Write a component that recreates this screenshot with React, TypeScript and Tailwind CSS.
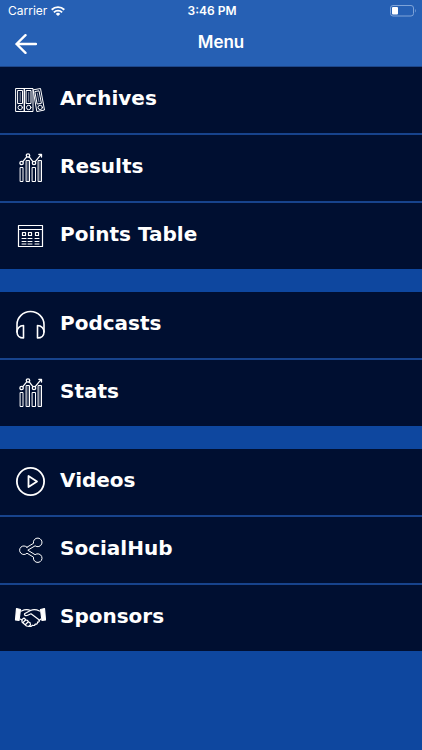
import type { ReactNode } from "react";

interface MenuItem {
  label: string;
  icon: ReactNode;
}

function Icon({ children, width = 1 }: { children: ReactNode; width?: number }) {
  return (
    <svg
      viewBox="0 0 32 32"
      className="size-8 shrink-0"
      fill="none"
      stroke="currentColor"
      strokeWidth={width}
      strokeLinecap="round"
      strokeLinejoin="round"
      aria-hidden="true"
    >
      {children}
    </svg>
  );
}

function BindersIcon() {
  return (
    <Icon>
      <path d="M2 4.5h8.5v23H2zM10.500 4.500h8.500v23h-8.500z" />
      <path d="M4 6.500h4.500v13H4zM12.500 6.500H17v13h-4.500z" />
      <path d="M6.200 8.500v9M14.700 8.500v9" strokeWidth="0.8" opacity="0.7" />
      <circle cx="6.2" cy="23.5" r="2.2" />
      <circle cx="14.7" cy="23.5" r="2.2" />
      <path d="m19.500 5.800 7-1.300L30.500 26l-7.300 1.500z" />
      <path d="m21.200 7.500 3.800-.7 2.400 12.500-3.900.7z" />
      <path d="m23.300 9.200 1.700 8.600" strokeWidth="0.8" opacity="0.7" />
      <circle cx="26.200" cy="23.400" r="2.200" />
    </Icon>
  );
}

function ChartIcon() {
  return (
    <Icon>
      <path d="M6.500 15.500h2.500v14H6.500zM12.500 8.500h3v21h-3zM18.500 15.500h3v14h-3zM24.500 8.500h3v21h-3z" />
      <path d="M14 9v20M26 9v20" strokeWidth="1" opacity="0.5" />
      <circle cx="7.6" cy="11" r="1.7" strokeWidth="1.3" />
      <circle cx="14" cy="3.500" r="1.700" strokeWidth="1.3" />
      <circle cx="20" cy="11" r="1.700" strokeWidth="1.3" />
      <path d="M8.800 9.600 12.700 4.900M15.200 4.900l3.700 4.700M21.200 9.600l5.800-7M24.800 2.300h2.700V5" strokeWidth="1.3" />
    </Icon>
  );
}

function TableIcon() {
  return (
    <Icon>
      <path d="M4.5 5.5h24v21h-24zM4.500 9.500h24" strokeWidth="1.2" />
      <path d="M8.500 12.500h3v3h-3zM14.500 12.500h3v3h-3zM21.500 12.500h3v3h-3z" strokeWidth="1.2" />
      <path d="M8 18.500h4M14 18.500h4M21 18.500h4M8 21.500h4M14 21.500h4M21 21.500h4M8 24h4M14 24h4M21 24h4" />
    </Icon>
  );
}

function HeadphonesIcon() {
  return (
    <Icon width={1.6}>
      <path d="M3 23v-7.500a13.500 13 0 0 1 27 0V23" />
      <path d="M9.500 16.500V29C5.500 29 3 26.500 3 23s2.500-6.500 6.500-6.500zM23.500 16.500V29c4 0 6.500-2.500 6.500-6s-2.500-6.500-6.500-6.500z" />
    </Icon>
  );
}

function PlayIcon() {
  return (
    <Icon width={1.8}>
      <circle cx="16.5" cy="15.5" r="13.6" />
      <path d="M14.500 10v11l8.500-5.500z" />
    </Icon>
  );
}

function ShareIcon() {
  return (
    <Icon>
      <path d="M13 13.200 19.500 9.300a4.300 4.300 0 1 1 1.600 2.500L13.800 16.200l7.300 4.500a4.300 4.300 0 1 1-1.600 2.500L13 19.200a4.300 4.300 0 1 1 0-6z" />
    </Icon>
  );
}

function HandshakeIcon() {
  return (
    <Icon width={1.2}>
      <path d="m2.500 6.500 4 1L5 18.500 1.500 18zM30.500 6.500l-4 1L28 18.500l3.500-.5z" fill="currentColor" />
      <path d="M7.500 9c3-1.500 6-2 9-.5 3-1.500 6-1 9 .5M6 17l2 1M27 17l-2 1.500" />
      <path d="m16.500 8.500-6 3.300c-.5 1.700 1.500 2.200 3.200 1.400l3.300-1.400 8 6c1 1.200 0 2.600-1.500 2.200.4 1.500-.8 2.500-2.200 2-.3 1.400-1.700 1.900-3 1.200-.6 1.300-2 1.500-3 .8" />
      <path d="m8 17.500 2-1.500 2 2 1.500.3 1 1.700 1.500.6.5 2.200-1.500 1.600-2.500-.4-4.500-4z" />
      <path d="m9 20.500 2.500-2.500M11.500 22.500l2.500-2.500" />
    </Icon>
  );
}

const groups: MenuItem[][] = [
  [
    { label: "Archives", icon: <BindersIcon /> },
    { label: "Results", icon: <ChartIcon /> },
    { label: "Points Table", icon: <TableIcon /> },
  ],
  [
    { label: "Podcasts", icon: <HeadphonesIcon /> },
    { label: "Stats", icon: <ChartIcon /> },
  ],
  [
    { label: "Videos", icon: <PlayIcon /> },
    { label: "SocialHub", icon: <ShareIcon /> },
    { label: "Sponsors", icon: <HandshakeIcon /> },
  ],
];

function StatusBar() {
  return (
    <div className="grid h-[22px] grid-cols-3 items-center pr-1.5 pl-2">
      <div className="flex items-center gap-1">
        <span className="text-xs">Carrier</span>
        <svg viewBox="0 0 14 10" className="h-2.5 w-3.5" fill="none" stroke="currentColor" strokeWidth="1.9" aria-hidden="true">
          <path d="M.7 3.7a9 9 0 0 1 12.6 0M2.900 6.300a5.800 5.800 0 0 1 8.200 0" />
          <path d="M7 10 4.800 7.900a3.200 3.200 0 0 1 4.400 0z" fill="currentColor" stroke="none" />
        </svg>
      </div>
      <span className="text-center text-xs font-semibold">3:46 PM</span>
      <svg viewBox="0 0 26 12" className="h-3 w-[26px] justify-self-end" fill="none" aria-hidden="true">
        <rect x=".5" y=".5" width="23" height="10.5" rx="2.5" stroke="#7ea3d8" />
        <rect x="2" y="2" width="6" height="7.5" rx="1" fill="white" />
        <path d="M25 4v3.500c1-.5 1-3 0-3.500z" fill="#7ea3d8" />
      </svg>
    </div>
  );
}

export default function App() {
  return (
    <div className="min-h-screen bg-[#0e479f] font-['Inter',sans-serif] text-white">
      <header className="border-b border-[#1d4689] bg-[#2660b4]">
        <StatusBar />
        <div className="flex h-11 items-center">
          <button type="button" aria-label="Back" className="flex w-[52px] pl-[15px]">
            <svg viewBox="0 0 22 20" className="h-5 w-[22px]" fill="none" stroke="currentColor" strokeWidth="2.4" strokeLinecap="round" strokeLinejoin="round" aria-hidden="true">
              <path d="M21 10H1.500M10.500 1.200 1.500 10l9 8.800" />
            </svg>
          </button>
          <h1 className="flex-1 pr-8 pb-0.5 text-center text-[17px] font-semibold">Menu</h1>
        </div>
      </header>

      <nav className="space-y-[23px]">
        {groups.map((items) => (
          <ul key={items[0].label} className="space-y-0.5 bg-[#17438c]">
            {items.map((item) => (
              <li key={item.label}>
                <a href="#" className="flex h-[66px] items-center gap-3.5 bg-[#000f31] px-3.5">
                  {item.icon}
                  <span className="pb-1 font-['DejaVu_Sans',sans-serif] text-xl font-bold">{item.label}</span>
                </a>
              </li>
            ))}
          </ul>
        ))}
      </nav>
    </div>
  );
}
